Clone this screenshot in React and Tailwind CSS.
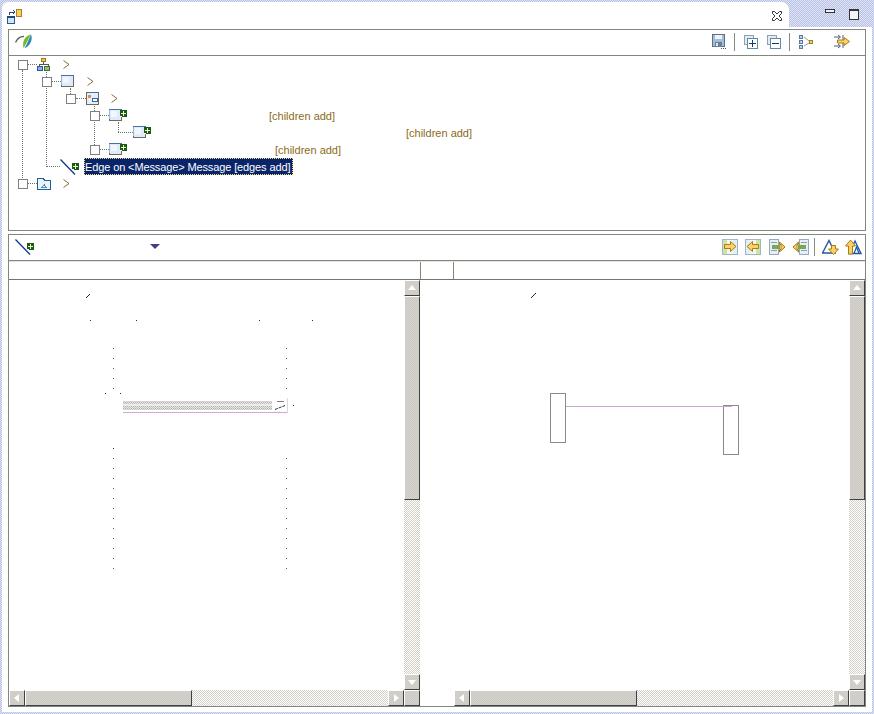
const dither = "bg-[repeating-conic-gradient(#d4d0c8_0_25%,#ffffff_0_50%)] bg-[length:2px_2px]";
const thumb = "bg-[repeating-conic-gradient(#d8d0ca_0_25%,#cacbc4_0_50%)] bg-[length:2px_2px] border border-t-white border-l-white border-r-[#404040] border-b-[#404040]";

function Expander() {
  return <div className="relative w-[10px] h-[10px] shrink-0 border border-[#7f7f7f] bg-white" />;
}

function Dots({ className }) {
  return <div className={"h-0 shrink-0 border-t border-dotted border-[#667766] " + className} />;
}

function Chevron() {
  return (
    <svg width="7" height="9" viewBox="0 0 7 9" className="shrink-0">
      <path d="M0.5 0.5L6 4.5L0.5 8.5" fill="none" stroke="#8a6a3a" strokeWidth="1" />
    </svg>
  );
}

function Plus({ x = 0, y = 0 }) {
  return (
    <g transform={`translate(${x} ${y})`} shapeRendering="crispEdges">
      <rect width="7" height="7" fill="#1c5a10" />
      <rect x="3" y="1" width="1" height="5" fill="#e8f4d8" />
      <rect x="1" y="3" width="5" height="1" fill="#e8f4d8" />
      <rect x="0" y="6" width="2" height="1" fill="#fff" />
    </g>
  );
}

function NodeBox({ plus }) {
  return (
    <svg width={plus ? 19 : 14} height="13" viewBox={plus ? "0 0 19 13" : "0 0 14 13"} className="shrink-0">
      <g shapeRendering="crispEdges">
        <rect x="0.5" y="0.5" width="12" height="11" fill="#dfeafc" stroke="#6f6a55" />
        <rect x="0" y="0" width="13" height="1" fill="#3f74a8" />
        <rect x="0" y="1" width="1" height="9" fill="#9fb8d4" />
        <rect x="2" y="2" width="6" height="6" fill="#f2f6ff" />
      </g>
      {plus && <Plus x="11" y="1" />}
    </svg>
  );
}

function RootIcon() {
  return (
    <svg width="14" height="13" viewBox="0 0 14 13" className="shrink-0">
      <g shapeRendering="crispEdges">
        <rect x="4.5" y="0.5" width="4" height="3" fill="#f0c860" stroke="#a07820" />
        <path d="M6 4V6M2 8V6H11V8" fill="none" stroke="#555" />
        <rect x="0.5" y="8.5" width="5" height="4" fill="#8fb0e0" stroke="#2a5a98" />
        <rect x="7.5" y="8.5" width="5" height="4" fill="#90c070" stroke="#3a7030" />
      </g>
    </svg>
  );
}

function DiagramIcon() {
  return (
    <svg width="14" height="13" viewBox="0 0 14 13" className="shrink-0">
      <g shapeRendering="crispEdges">
        <rect x="0.5" y="0.5" width="12" height="12" fill="#e4eefc" stroke="#6f6a55" />
        <rect x="0" y="0" width="13" height="1" fill="#3f74a8" />
        <rect x="2" y="3" width="3" height="3" fill="#e89030" />
        <rect x="6.5" y="6.5" width="5" height="3" fill="#fff" stroke="#2f6aa8" />
      </g>
    </svg>
  );
}

function FolderIcon() {
  return (
    <svg width="14" height="12" viewBox="0 0 14 12" className="shrink-0">
      <g shapeRendering="crispEdges">
        <path d="M0.5 11.5V0.5H6.5L7.5 2.5H13.5V11.5Z" fill="#eaf2fa" stroke="#1f6098" />
        <path d="M4 9.5H10L7 5.5Z" fill="#cfe0f0" stroke="#3a78a8" strokeWidth="0.8" />
      </g>
    </svg>
  );
}

function EdgeIcon({ w = 20 }) {
  return (
    <svg width={w} height="16" viewBox="0 0 20 16" className="shrink-0">
      <path d="M0.5 0.5L15 15.5" stroke="#0a2f88" strokeWidth="1.2" fill="none" />
      <Plus x="12" y="4" />
    </svg>
  );
}

function TreeRow({ className, children }) {
  return <div className={"h-[17px] flex items-center " + className}>{children}</div>;
}

function Label({ className }) {
  return <span className={"pt-[2px] text-[#8a6d20] whitespace-nowrap " + className}>[children add]</span>;
}

function Tree() {
  return (
    <div className="relative flex-1 font-['Liberation_Sans',sans-serif] text-[11px] leading-none">
      <div className="absolute left-[13px] top-[14px] h-[108px] border-l border-dotted border-[#667766]" />
      <div className="absolute left-[37px] top-[16px] h-[95px] border-l border-dotted border-[#667766]" />
      <div className="absolute left-[61px] top-[32px] h-[6px] border-l border-dotted border-[#667766]" />
      <div className="absolute left-[85px] top-[50px] h-[39px] border-l border-dotted border-[#667766]" />
      <div className="absolute left-[109px] top-[66px] h-[10px] border-l border-dotted border-[#667766]" />
      <TreeRow className="pl-[9px]">
        <Expander /><Dots className="w-[9px]" /><RootIcon /><span className="w-[12px]" /><Chevron />
      </TreeRow>
      <TreeRow className="pl-[33px]">
        <Expander /><Dots className="w-[9px]" /><NodeBox /><span className="w-[12px]" /><Chevron />
      </TreeRow>
      <TreeRow className="pl-[57px]">
        <Expander /><Dots className="w-[10px]" /><DiagramIcon /><span className="w-[11px]" /><Chevron />
      </TreeRow>
      <TreeRow className="pl-[81px]">
        <Expander /><Dots className="w-[9px]" /><NodeBox plus /><Label className="ml-[141px]" />
      </TreeRow>
      <TreeRow className="pl-[109px]">
        <Dots className="w-[15px]" /><NodeBox plus /><Label className="ml-[254px]" />
      </TreeRow>
      <TreeRow className="pl-[81px]">
        <Expander /><Dots className="w-[9px]" /><NodeBox plus /><Label className="ml-[147px]" />
      </TreeRow>
      <TreeRow className="pl-[37px]">
        <Dots className="w-[14px]" /><EdgeIcon />
        <span className="ml-[4px] h-[17px] w-[209px] pt-[2px] flex items-center bg-[#0a246a] text-white tracking-[-0.12px] whitespace-nowrap border border-dotted border-[#f0e080]">
          Edge on &lt;Message&gt; Message [edges add]
        </span>
      </TreeRow>
      <TreeRow className="pl-[9px]">
        <Expander /><Dots className="w-[9px]" /><FolderIcon /><span className="w-[12px]" /><Chevron />
      </TreeRow>
    </div>
  );
}

function Logo() {
  return (
    <svg width="17" height="15" viewBox="0 0 17 15">
      <path d="M0.5 8.5C2.5 4 5 2.2 9 2.5" fill="none" stroke="#666" strokeWidth="1.4" />
      <path d="M8.5 14C7 8 9.5 2 16 0.5C13 4.5 12 9 8.5 14Z" fill="#78b820" />
      <path d="M9.5 14C12.5 9.5 13.5 5 16 0.5C18 5 15.5 12 9.5 14Z" fill="#2a8ab8" />
    </svg>
  );
}

function SaveIcon() {
  return (
    <svg width="15" height="16" viewBox="0 0 15 16">
      <g shapeRendering="crispEdges">
        <rect x="0.5" y="0.5" width="12" height="12" fill="#a8bcd4" stroke="#5a7088" />
        <rect x="3" y="1" width="7" height="4" fill="#f0f4f8" />
        <rect x="3" y="8" width="7" height="5" fill="#6a8098" />
        <rect x="4" y="9" width="2" height="3" fill="#dfe6ee" />
        <rect x="9" y="14" width="1" height="1" fill="#3a5a80" />
        <rect x="11" y="14" width="1" height="1" fill="#3a5a80" />
        <rect x="13" y="14" width="1" height="1" fill="#3a5a80" />
      </g>
    </svg>
  );
}

function ExpandIcon({ plus }) {
  return (
    <svg width="14" height="14" viewBox="0 0 14 14">
      <g shapeRendering="crispEdges">
        <rect x="0.5" y="0.5" width="9" height="9" fill="#e4ecf2" stroke="#8aa4b4" />
        <rect x="3.5" y="3.5" width="10" height="10" fill="#fff" stroke="#5f8aa4" />
        <rect x="5" y="8" width="7" height="1" fill="#103a7a" />
        {plus && <rect x="8" y="5" width="1" height="7" fill="#103a7a" />}
      </g>
    </svg>
  );
}

function HierarchyIcon() {
  return (
    <svg width="15" height="15" viewBox="0 0 15 15">
      <g shapeRendering="crispEdges">
        <rect x="0.5" y="1.5" width="3" height="3" fill="#c0d0e8" stroke="#5a7aa8" />
        <rect x="0.5" y="6.5" width="3" height="3" fill="#c0d0e8" stroke="#5a7aa8" />
        <rect x="0.5" y="11.5" width="3" height="3" fill="#c0d0e8" stroke="#5a7aa8" />
        <rect x="10.5" y="6.5" width="3" height="3" fill="#f0d060" stroke="#a08020" />
      </g>
      <path d="M5 3L10 7M5 12L10 9" stroke="#9a9a9a" fill="none" />
    </svg>
  );
}

function Arrow({ d, fill = "#f8d468", stroke = "#b07810" }) {
  return <path d={d} fill={fill} stroke={stroke} strokeWidth="1" />;
}

function FilterIcon() {
  return (
    <svg width="16" height="16" viewBox="0 0 16 16">
      <path d="M0 3H6M0 12H6M4 1L6.5 3L4 5M4 10L6.5 12L4 14M9 1V14" fill="none" stroke="#4a6078" />
      <Arrow d="M3.5 6H10V3.5L15.5 7.5L10 11.5V9H3.5Z" />
    </svg>
  );
}

const rightArrow = "M2.5 5.5H8.5V2.5L14 7.5L8.5 12.5V9.5H2.5Z";
const leftArrow = "M13.5 5.5H7.5V2.5L2 7.5L7.5 12.5V9.5H13.5Z";

function MergeIcon({ left }) {
  return (
    <svg width="16" height="16" viewBox="0 0 16 16">
      <g shapeRendering="crispEdges">
        <rect x="0.5" y="0.5" width="15" height="15" fill="#f2f8ee" stroke="#a4b4c4" />
        <rect x="1" y="1" width="4" height="14" fill={left ? "#dff0f8" : "#c8e6a8"} />
        <rect x="11" y="1" width="4" height="14" fill={left ? "#c8e6a8" : "#dff0f8"} />
      </g>
      <Arrow d={left ? leftArrow : rightArrow} />
    </svg>
  );
}

function CopyIcon({ left }) {
  return (
    <svg width="17" height="16" viewBox="0 0 17 16">
      <g shapeRendering="crispEdges">
        <rect x={left ? 7.5 : 0.5} y="0.5" width="9" height="15" fill="#e8eef6" stroke="#98a8bc" />
        <rect x={left ? 9 : 2} y="3" width="6" height="1" fill="#88a0c0" />
        <rect x={left ? 9 : 2} y="11" width="6" height="1" fill="#88a0c0" />
        <rect x={left ? 6 : 3} y="6" width="8" height="4" fill="#78a850" />
      </g>
      <Arrow d={left ? "M5 5.5H6.5V3L1 8L6.5 13V10.5H5Z" : "M12 5.5H10.5V3L16 8L10.5 13V10.5H12Z"} />
    </svg>
  );
}

function NavIcon({ up }) {
  if (up) {
    return (
      <svg width="17" height="16" viewBox="0 0 17 16">
        <path d="M4 14.5L10 2L16 14.5Z" fill="none" stroke="#1f5aa0" strokeWidth="1.4" />
        <path d="M9 14.5L11.5 8L14 14.5" fill="none" stroke="#1f5aa0" strokeWidth="1.2" />
        <Arrow d="M3.5 15V7H0.5L5.5 1L10.5 7H7.5V15Z" />
      </svg>
    );
  }
  return (
    <svg width="17" height="16" viewBox="0 0 17 16">
      <path d="M0.5 14L7 1.5L13 14Z" fill="none" stroke="#1f5aa0" strokeWidth="1.4" />
      <Arrow d="M9.5 6.5V10H6.5L11.5 15.5L16.5 10H13.5V6.5Z" />
    </svg>
  );
}

function Sep() {
  return <div className="w-px h-[18px] bg-[#8a8a8a]" />;
}

function ScrollButton({ dir }) {
  const d = { up: "M4 10L8 5L12 10Z", down: "M4 6L8 11L12 6Z", left: "M10 4L5 8L10 12Z", right: "M6 4L11 8L6 12Z" }[dir];
  return (
    <div className={"w-4 h-4 shrink-0 " + thumb}>
      <svg width="14" height="14" viewBox="1 1 14 14" className="block">
        <path d={d} fill="#fff" />
      </svg>
    </div>
  );
}

function VScroll() {
  return (
    <div className={"w-4 flex flex-col shrink-0 " + dither}>
      <ScrollButton dir="up" />
      <div className={"h-[204px] " + thumb} />
      <div className="flex-1" />
      <ScrollButton dir="down" />
    </div>
  );
}

function HScroll({ className }) {
  return (
    <div className={"h-4 flex flex-1 " + dither + " " + (className || "")}>
      <ScrollButton dir="left" />
      <div className={"w-[167px] " + thumb} />
      <div className="flex-1" />
      <ScrollButton dir="right" />
    </div>
  );
}

function LeftDiagram() {
  const upper = [68, 78, 88, 98, 108];
  const lower = [178, 188, 198, 208, 218, 228, 238, 248, 258, 268, 278, 288];
  return (
    <svg className="flex-1 h-full" viewBox="0 0 395 410">
      <defs>
        <pattern id="stripe" width="2" height="2" patternUnits="userSpaceOnUse">
          <rect width="2" height="2" fill="#e4ece0" />
          <rect width="1" height="1" fill="#a8b4a0" />
          <rect x="1" y="1" width="1" height="1" fill="#c8c0cc" />
        </pattern>
      </defs>
      <path d="M77 18L81 14" stroke="#222" />
      <path d="M266 129.5L276 125.5" stroke="#333" strokeDasharray="3 1" />
      <g shapeRendering="crispEdges">
        {[[81, 40], [127, 40], [250, 40], [303, 40], [96, 113], [111, 113], [284, 125], [104, 168]].map(([x, y]) => (
          <rect key={x + "-" + y} x={x} y={y} width="1" height="1" fill="#333" />
        ))}
        {[...upper, ...lower].map((y) => (
          <g key={y}>
            <rect x="104" y={y} width="1" height="1" fill="#555" />
            <rect x="277" y={y} width="1" height="1" fill="#555" />
          </g>
        ))}
        <rect x="114" y="121" width="149" height="3" fill="url(#stripe)" />
        <rect x="114" y="124" width="149" height="2" fill="#f0e8f0" />
        <rect x="114" y="126" width="149" height="4" fill="url(#stripe)" />
        <rect x="114" y="132" width="164" height="1" fill="#cfa8d0" />
        <rect x="278" y="118" width="1" height="15" fill="#d8d8d8" />
        <rect x="268" y="121" width="7" height="1" fill="#8a7a8a" />
      </g>
    </svg>
  );
}

function RightDiagram() {
  return (
    <svg className="flex-1 h-full" viewBox="0 0 429 410">
      <path d="M111 18L116 13" stroke="#222" />
      <g shapeRendering="crispEdges">
        <rect x="130.5" y="113.5" width="15" height="49" fill="#fff" stroke="#8a8a8a" />
        <rect x="303.5" y="125.5" width="15" height="49" fill="#fff" stroke="#8a8a8a" />
        <rect x="146" y="126" width="166" height="1" fill="#c8a8cc" />
      </g>
    </svg>
  );
}

export default function App() {
  return (
    <div className="w-[874px] h-[714px] p-[2px] flex flex-col overflow-hidden bg-[repeating-conic-gradient(#b8c2e6_0_25%,#dfe3f4_0_50%)] bg-[length:2px_2px]">
      {/* TAB STRIP */}
      <div className="h-[25px] flex shrink-0">
        <div className="w-[787px] bg-white rounded-tl-md rounded-tr-lg pl-[5px] pr-[6px] flex items-center justify-between">
          <svg width="16" height="16" viewBox="0 0 16 16" className="mt-[5px]">
            <g shapeRendering="crispEdges">
              <rect x="0.5" y="7.5" width="7" height="7" fill="#cfe4f4" stroke="#2a5a88" />
              <rect x="0" y="7" width="8" height="2" fill="#1f4a78" />
              <rect x="9.5" y="0.5" width="5" height="7" fill="#f4d060" stroke="#b08020" />
              <path d="M2 6V3H8M6 1L8 3L6 5" fill="none" stroke="#1f4a78" />
            </g>
          </svg>
          <svg width="12" height="12" viewBox="0 0 12 12" className="mt-[3px]">
            <path d="M1.5 1.5H3.5L6 4L8.5 1.5H10.5V3.5L8 6L10.5 8.5V10.5H8.5L6 8L3.5 10.5H1.5V8.5L4 6L1.5 3.5Z" fill="#fff" stroke="#333" />
          </svg>
        </div>
        <div className="flex-1 flex pl-[36px] pt-[7px] gap-[14px]">
          <div className="w-[10px] h-[4px] border border-[#333] bg-[#f4f4f8]" />
          <div className="w-[10px] h-[11px] border border-[#333] border-t-2 bg-[#f4f4f8]" />
        </div>
      </div>

      {/* BODY */}
      <div className="flex-1 min-h-0 bg-white px-[6px] pt-[2px] pb-[5px] flex flex-col gap-[3px]">
        {/* TREE PANEL */}
        <div className="h-[202px] shrink-0 border border-[#7f877f] flex flex-col">
          <div className="h-[26px] shrink-0 border-b border-[#7f877f] flex items-center pl-[6px] pr-[15px] pb-[2px]">
            <Logo />
            <div className="ml-auto flex items-center">
              <SaveIcon />
              <div className="w-[7px]" /><Sep /><div className="w-[9px]" />
              <ExpandIcon plus />
              <div className="w-[9px]" />
              <ExpandIcon />
              <div className="w-[8px]" /><Sep /><div className="w-[9px]" />
              <HierarchyIcon />
              <div className="w-[20px]" />
              <FilterIcon />
            </div>
          </div>
          <Tree />
        </div>

        {/* COMPARE PANEL */}
        <div className="flex-1 min-h-0 border border-[#7f877f] flex flex-col">
          <div className="h-[26px] shrink-0 border-b border-[#7f877f] flex items-center pl-[6px] pr-[3px] pb-[2px]">
            <EdgeIcon />
            <svg width="10" height="5" viewBox="0 0 10 5" className="ml-[115px]">
              <path d="M0 0H10L5 5Z" fill="#4a3a88" />
            </svg>
            <div className="ml-auto flex items-center">
              <MergeIcon />
              <div className="w-[7px]" />
              <MergeIcon left />
              <div className="w-[8px]" />
              <CopyIcon />
              <div className="w-[6px]" />
              <CopyIcon left />
              <div className="w-[5px]" /><Sep /><div className="w-[7px]" />
              <NavIcon />
              <div className="w-[6px]" />
              <NavIcon up />
            </div>
          </div>
          <div className="h-[19px] shrink-0 border-b border-[#6f776f] flex border-t border-t-[#e4e4dc]">
            <div className="w-[412px] border-r border-[#7f877f]" />
            <div className="w-[33px] border-r border-[#7f877f]" />
          </div>
          <div className="flex-1 min-h-0 flex">
            <div className="w-[411px] flex flex-col shrink-0">
              <div className="flex-1 min-h-0 flex">
                <LeftDiagram />
                <VScroll />
              </div>
              <div className="flex">
                <HScroll />
                <div className={"w-4 h-4 " + thumb} />
              </div>
            </div>
            <div className="flex-1 flex flex-col min-w-0">
              <div className="flex-1 min-h-0 flex">
                <RightDiagram />
                <VScroll />
              </div>
              <div className="flex">
                <HScroll className="ml-[34px]" />
                <div className={"w-4 h-4 " + thumb} />
              </div>
            </div>
          </div>
        </div>
      </div>
    </div>
  );
}
